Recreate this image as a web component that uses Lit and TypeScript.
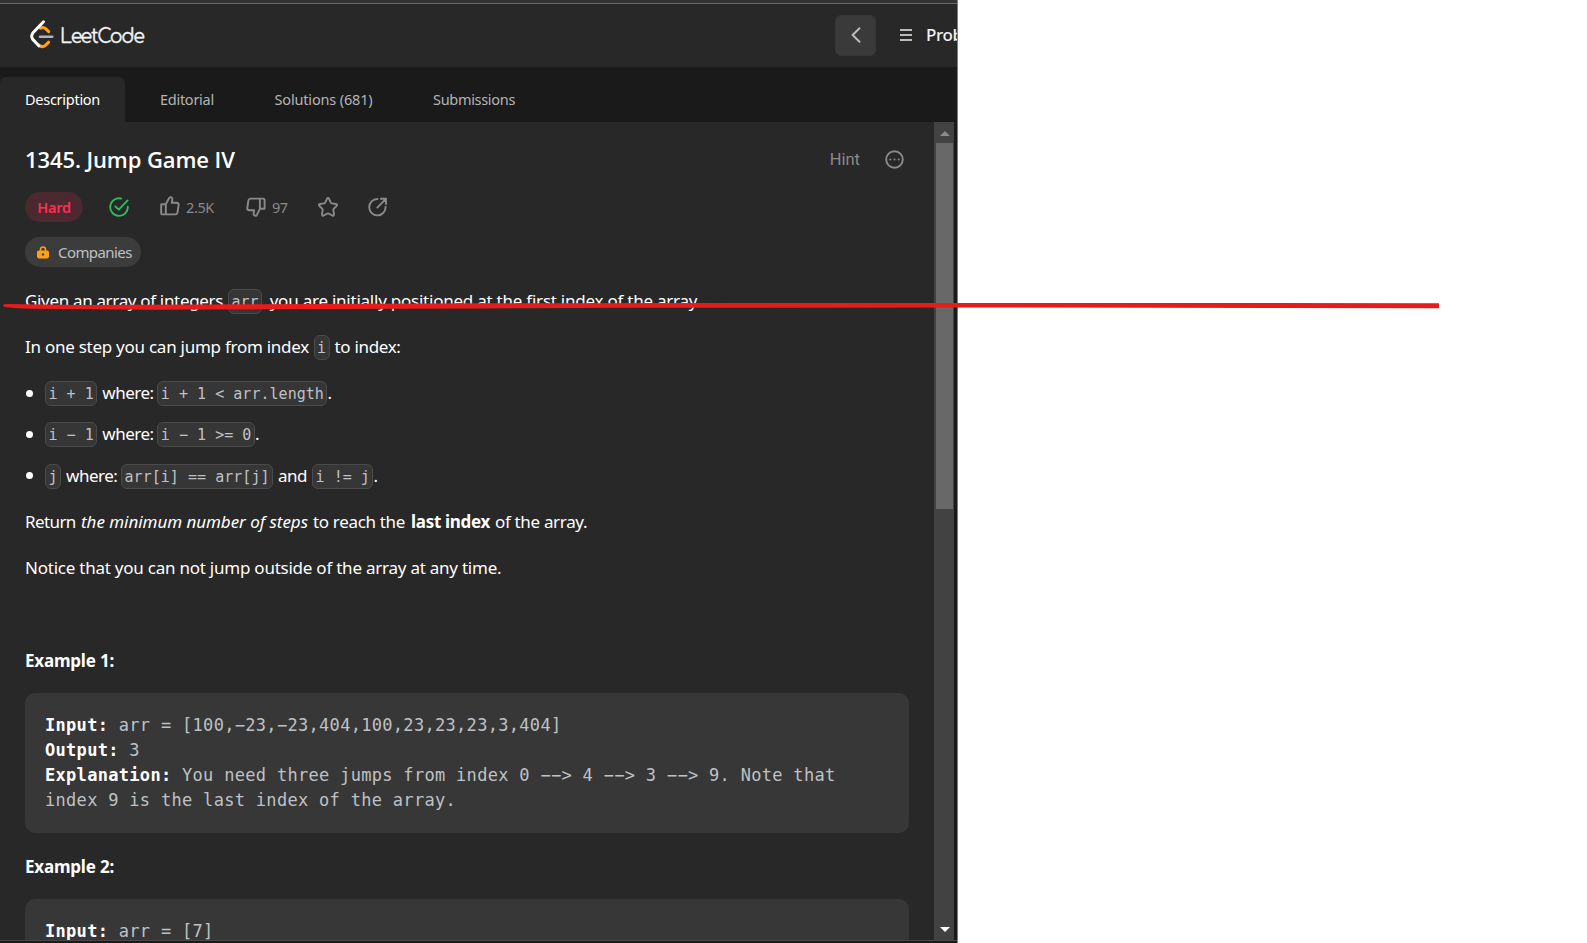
import { LitElement, html, css, svg } from "lit";
import { customElement } from "lit/decorators.js";

const icon = (w: number, h: number, body: unknown) =>
  html`<svg class="ic" width=${w} height=${h} viewBox="0 0 ${w} ${h}" fill="none" stroke="currentColor" stroke-width="1.9" stroke-linecap="round" stroke-linejoin="round">${body}</svg>`;

@customElement("app-root")
export class AppRoot extends LitElement {
  static styles = css`
    :host { display: block; position: relative; width: 1587px; height: 943px; overflow: hidden; background: #fff; font-family: "Noto Sans", "Open Sans", sans-serif; color: #fff; }
    * { box-sizing: border-box; }
    .ic { display: block; flex: none; }
    .window { width: 958px; height: 943px; background: #1a1a1a; border-right: 1px solid #7c7c7c; display: flex; flex-direction: column; overflow: hidden; }
    .strip { height: 4px; flex: none; background: #333; border-bottom: 1px solid #6a6a6a; }
    .top { height: 63px; flex: none; background: #282828; display: flex; align-items: center; padding: 0 0 1px 30px; white-space: nowrap; }
    .brand { font: 400 19px/24px "Comfortaa", "Lato", sans-serif; letter-spacing: -1.35px; color: #f4f4f4; margin: 3px 0 0 6px; width: 100px; -webkit-text-stroke: .3px #f4f4f4; }
    .back { width: 41px; height: 41px; flex: none; margin-left: 691px; margin-right: -15px; border-radius: 6px; background: #3a3a3a; border: 1px solid #363636; display: flex; align-items: center; justify-content: center; color: #bdbdbd; margin-left: auto; }
    .burger { width: 12px; height: 12px; margin-left: 39px; border-top: 2px solid #bdbdbd; border-bottom: 2px solid #bdbdbd; display: flex; align-items: center; flex: none; }
    .burger i { height: 2px; width: 12px; background: #bdbdbd; }
    .plist { margin-left: 14px; width: 31px; flex: none; font: 500 17px/24px "Noto Sans", sans-serif; letter-spacing: -.4px; color: #eff1f6; }
    .tabs { height: 55px; flex: none; padding-top: 10px; display: flex; font-size: 14.5px; color: #b4b4b4; line-height: 44px; white-space: nowrap; }
    .tab { height: 45px; padding-left: 25px; }
    .t1 { width: 125px; background: #282828; border-radius: 6px 6px 0 0; color: #fff; letter-spacing: -.27px; }
    .t2 { padding-left: 35px; width: 149.5px; letter-spacing: -.27px; }
    .t3 { padding-left: 0; width: 158.5px; letter-spacing: -.16px; }
    .t4 { padding-left: 0; letter-spacing: -.31px; }
    .main { height: 818px; flex: none; display: flex; padding-right: 3px; }
    .doc { width: 934px; background: #282828; padding: 0 25px; overflow: hidden; }
    .bar { width: 20px; background: #424242; display: flex; flex-direction: column; align-items: center; padding-left: 1px; }
    .up { width: 0; height: 0; margin-top: 9px; border: 5px solid transparent; border-top: 0; border-bottom-color: #8b8b8b; }
    .thumb { width: 17px; height: 366px; margin-top: 7px; background: #686868; }
    .down { width: 0; height: 0; margin-top: auto; margin-bottom: 8px; border: 5px solid transparent; border-bottom: 0; border-top-color: #fff; }
    .foot { height: 3px; flex: none; border-top: 1px solid #484848; background: #1a1a1a; }
    .title { height: 30px; margin-top: 22px; display: flex; align-items: center; }
    .name { font: 600 22px/30px "Open Sans", sans-serif; letter-spacing: -.1px; flex: 1; }
    .hint { font: 400 16.5px/30px "Roboto", sans-serif; color: #8a8a8a; margin: 2px 25px 0 0; }
    .more { color: #8a8a8a; margin-right: 5px; }
    .meta { display: flex; align-items: center; height: 30px; margin-top: 18px; color: #8a8a8a; font-size: 14.5px; }
    .hard { width: 58px; height: 30px; border-radius: 15px; background: #4b292f; color: #ff2d55; font-weight: 600; line-height: 31px; text-align: center; letter-spacing: -.3px; }
    .ok { color: #2cbb5d; margin: 0 0 1px 25.5px; }
    .like { margin: 0 0 2px 31.5px; }
    .n1 { margin-left: 6px; width: 60px; letter-spacing: -.4px; }
    .n2 { margin-left: 6px; width: 44.5px; letter-spacing: -.5px; }
    .share { margin: 0 0 1px 29px; }
    .company { width: 116px; height: 30px; margin-top: 15px; border-radius: 15px; background: #3c3c3c; color: #bfc1c4; font-size: 15px; line-height: 30px; letter-spacing: -.58px; display: flex; align-items: center; padding-left: 12px; gap: 9px; }
    .ln { display: flex; align-items: baseline; height: 26px; font-size: 17px; line-height: 26px; white-space: nowrap; color: #fff; }
    .p1 { margin-top: 21px; }
    .p2 { margin-top: 20px; }
    .p3 { margin-top: 21px; }
    .li { margin-top: 15.4px; }
    .dot { width: 7px; height: 7px; flex: none; align-self: center; border-radius: 50%; background: #fff; margin: 0 12.5px 0 .5px; }
    .a { letter-spacing: -.33px; }
    .b { letter-spacing: -.235px; }
    .c { letter-spacing: -.26px; }
    .w { letter-spacing: -.5px; padding-left: 5px; width: 60px; }
    .and { width: 39px; }
    .given { width: 203px; }
    .comma { width: 7.5px; }
    .step { width: 288.5px; }
    .to { margin-left: 5px; }
    .ret { width: 56px; letter-spacing: -.6px; }
    .it { font-style: italic; letter-spacing: -.04px; width: 232px; }
    .reach { width: 98px; }
    .bo { font-weight: 700; letter-spacing: -.3px; width: 84px; }
    .code { font: 15px/22px "DejaVu Sans Mono", monospace; letter-spacing: .03px; height: 25px; padding: 1px 2.5px 0; border: 1px solid #4b4b4b; border-radius: 6px; background: #363636; color: #bfc1c5; white-space: pre; margin-top: 1px; }
    .ex { font-weight: 700; letter-spacing: -.2px; }
    .ex1 { margin-top: 67px; }
    .ex2 { margin-top: 21px; }
    .pre { margin: 19px 0 0; width: 884px; height: 140px; border-radius: 10px; background: #373737; color: #bfc1c5; font: 17px/25px "DejaVu Sans Mono", monospace; letter-spacing: .305px; padding: 20px 20px 0; white-space: pre; }
    .pre b { color: #fff; }
    .mark { position: absolute; left: 0; top: 296px; }
  `;

  item(body: unknown) {
    return html`<i class="dot"></i>${body}`;
  }

  render() {
    return html`
      <div class="window">
        <div class="strip"></div>
        <div class="top">
          <svg class="ic" width="24" height="32" viewBox="0 0 24 32" fill="none" stroke-linecap="round" stroke-linejoin="round" stroke-width="3">
            <path stroke="#ffa116" d="M10.5 9.3Q13.4 7.6 15.6 9.7L18.7 12.7M9 26.2Q12.3 29 15.4 26.4L18.7 23.2" />
            <path stroke="#b3b3b3" d="M10 17.7H22.2" stroke-width="2.6" />
            <path stroke="#fff" d="M13.5 2.8L2.8 14Q.6 17.3 2.8 20.4L8.8 26.8" />
          </svg>
          <div class="brand">LeetCode</div>
          <div class="back">${icon(10, 16, svg`<path d="M8.5 1.2L1.6 8L8.5 14.8"/>`)}</div>
          <div class="burger"><i></i></div>
          <div class="plist">Problem List</div>
        </div>
        <div class="tabs">
          <div class="tab t1">Description</div>
          <div class="tab t2">Editorial</div>
          <div class="tab t3">Solutions (681)</div>
          <div class="tab t4">Submissions</div>
        </div>
        <div class="main">
          <div class="doc">
            <div class="title">
              <div class="name">1345. Jump Game IV</div>
              <div class="hint">Hint</div>
              <div class="more">${icon(19, 19, svg`<circle cx="9.5" cy="9.5" r="8.3"/><path d="M5.3 9.5h.01M9.5 9.5h.01M13.7 9.5h.01" stroke-width="2.1"/>`)}</div>
            </div>
            <div class="meta">
              <div class="hard">Hard</div>
              <div class="ok">${icon(20, 20, svg`<path d="M12.3 1.6A8.8 8.8 0 1 0 18.8 9.6M6.3 9.3L9.7 12.7L18.6 3.4"/>`)}</div>
              <div class="like">${icon(20, 20, svg`<path d="M1.4 8.2H5.8V18.4H2.4Q1.2 18.4 1.2 17.2V8.4ZM5.8 8.2L9 2.3Q9.6 .9 11 1.2Q12.6 1.8 12.3 3.5L11.8 6.8H16.5Q19 7 18.6 9.2L17.5 16.5Q17.1 18.4 15.3 18.4H5.8"/>`)}</div>
              <div class="n1">2.5K</div>
              ${icon(20, 20, svg`<path d="M18.4 11.8H13.9V1.6H17.3Q18.6 1.6 18.6 2.8V11.6ZM13.9 11.8L11 17.7Q10.2 19.2 8.8 18.7Q7.3 18.2 7.6 16.5L8.1 13.2H3.4Q.9 13 1.3 10.8L2.4 3.5Q2.8 1.6 4.6 1.6H13.9"/>`)}
              <div class="n2">97</div>
              ${icon(22, 20, svg`<path d="M11 1Q11.6 1 12 1.8L13.8 5.6Q14.1 6.3 14.9 6.4L18.9 7Q21 7.4 19.5 9L16.7 11.8Q16.2 12.4 16.3 13.1L17 17.2Q17.2 19.3 15.3 18.5L11.8 16.6Q11 16.2 10.2 16.6L6.7 18.5Q4.8 19.3 5 17.2L5.7 13.1Q5.8 12.4 5.3 11.8L2.5 9Q1 7.4 3.1 7L7.1 6.4Q7.9 6.3 8.2 5.6L10 1.8Q10.4 1 11 1Z"/>`)}
              <div class="share">${icon(20, 20, svg`<path d="M9.5 2A8.2 8.2 0 1 0 17.6 9.8M9.3 10.6L17.6 2.2M12.8 1.8H18V7"/>`)}</div>
            </div>
            <div class="company">
              <svg class="ic" width="12" height="13" viewBox="0 0 12 13"><path d="M3.5 5V3.4a2.5 2.5 0 0 1 5 0V5" fill="none" stroke="#ffa116" stroke-width="1.5"/><rect y="4.4" width="12" height="8" rx="1.8" fill="#ffa116"/><circle cx="6" cy="8.4" r="1.2" fill="#3c3c3c"/></svg>
              <span>Companies</span>
            </div>

            <div class="ln p1"><span class="a given">Given an array of integers</span><span class="code">arr</span><span class="comma">,</span><span class="b">you are initially positioned at the first index of the array.</span></div>
            <div class="ln p2"><span class="c step">In one step you can jump from index</span><span class="code">i</span><span class="a to">to index:</span></div>
            <div class="ln p2">${this.item(html`<span class="code">i + 1</span><span class="w">where:</span><span class="code">i + 1 &lt; arr.length</span><span>.</span>`)}</div>
            <div class="ln li">${this.item(html`<span class="code">i − 1</span><span class="w">where:</span><span class="code">i − 1 &gt;= 0</span><span>.</span>`)}</div>
            <div class="ln li">${this.item(html`<span class="code">j</span><span class="w">where:</span><span class="code">arr[i] == arr[j]</span><span class="w and">and</span><span class="code">i != j</span><span>.</span>`)}</div>
            <div class="ln p2"><span class="ret">Return</span><span class="it">the minimum number of steps</span><span class="a reach">to reach the</span><span class="bo">last index</span><span class="a">of the array.</span></div>
            <div class="ln p2"><span class="b">Notice that you can not jump outside of the array at any time.</span></div>
            <div class="ln ex ex1">Example 1:</div>
            <pre class="pre"><b>Input:</b> arr = [100,−23,−23,404,100,23,23,23,3,404]
<b>Output:</b> 3
<b>Explanation:</b> You need three jumps from index 0 −−&gt; 4 −−&gt; 3 −−&gt; 9. Note that
index 9 is the last index of the array.</pre>
            <div class="ln ex ex2">Example 2:</div>
            <pre class="pre"><b>Input:</b> arr = [7]</pre>
          </div>
          <div class="bar"><div class="up"></div><div class="thumb"></div><div class="down"></div></div>
        </div>
        <div class="foot"></div>
      </div>
      <svg class="mark" width="1445" height="20" viewBox="0 0 1445 20"><path fill="#e81b1b" d="M3 9.8Q3 8 6 8L80 8.9L480 7.3L960 6.9L1439 7.2V12.2L960 11.4L640 11.8L480 12.4L150 13.7L30 12.8Q3 12 3 9.8Z"/></svg>
    `;
  }
}
